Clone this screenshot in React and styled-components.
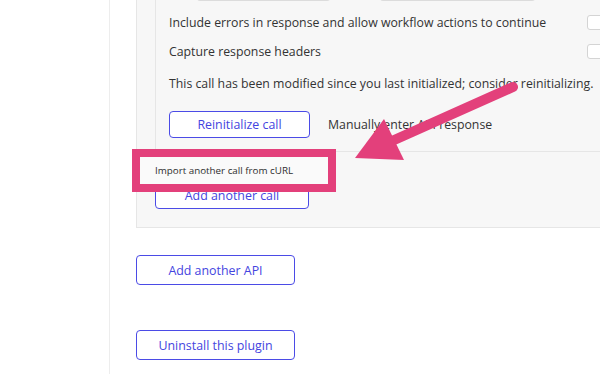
import React from 'react';
import styled, { createGlobalStyle } from 'styled-components';

const GlobalStyle = createGlobalStyle`
  html, body {
    margin: 0;
    padding: 0;
    background: #ffffff;
  }
  body {
    font-family: 'Open Sans', 'Liberation Sans', sans-serif;
    color: #333333;
  }
`;

const Page = styled.div`
  position: relative;
  width: 600px;
  height: 374px;
  overflow: hidden;
  display: flex;
  background: #ffffff;
`;

const Sidebar = styled.div`
  flex: 0 0 109px;
  border-right: 1px solid #ededed;
`;

const Main = styled.div`
  flex: 0 0 auto;
  width: 520px;
  padding-left: 26px;
  margin-top: -40px;
  display: flex;
  flex-direction: column;
  align-items: flex-start;
`;

const OuterCard = styled.div`
  width: 501px;
  box-sizing: border-box;
  background: #f7f7f7;
  border: 1px solid #e6e6e6;
  padding: 19px 18px 18px;
`;

const InnerCard = styled.div`
  background: #f7f7f7;
  border: 1px solid #e6e6e6;
  padding: 0 13px 13px;
`;

const InputRow = styled.div`
  display: flex;
  height: 20px;
  padding-left: 28px;
`;

const FakeInput = styled.div`
  width: ${p => p.$w}px;
  margin-right: ${p => p.$gap || 0}px;
  background: #ffffff;
  border: 1px solid #dcdcdc;
  border-top: none;
  border-radius: 0 0 3px 3px;
`;

const OptionRow = styled.div`
  display: flex;
  align-items: center;
  justify-content: space-between;
  height: 29px;
  margin-top: ${p => p.$top || 0}px;
  font-size: 12.3px;
  white-space: nowrap;
`;

const Checkbox = styled.div`
  width: 15px;
  height: 13px;
  background: #ffffff;
  border: 1px solid #d4d4d4;
  border-radius: 3px;
`;

const Notice = styled.p`
  margin: 9px 0 0;
  font-size: 12.3px;
  line-height: 18px;
  white-space: nowrap;
`;

const ActionRow = styled.div`
  display: flex;
  align-items: center;
  gap: 18px;
  margin-top: 18px;
  font-size: 12.3px;
`;

const Button = styled.button`
  width: ${p => p.$w}px;
  height: ${p => p.$h || 30}px;
  margin-top: ${p => p.$top || 0}px;
  padding: 0;
  background: #ffffff;
  border: 1px solid #4b4be6;
  border-radius: 4px;
  color: #4444e0;
  font-family: 'Open Sans', 'Liberation Sans', sans-serif;
  font-size: 12.4px;
  cursor: pointer;
`;

const Highlight = styled.div`
  position: absolute;
  left: 132px;
  top: 149px;
  width: 204px;
  height: 43px;
  box-sizing: border-box;
  border: 8px solid #e3407b;
  background: #fafafa;
  display: flex;
  align-items: center;
  padding-left: 15px;
  font-size: 9.8px;
  color: #2e2e2e;
`;

const ArrowLayer = styled.svg`
  position: absolute;
  left: 0;
  top: 0;
  pointer-events: none;
`;

const Arrow = () => (
  <ArrowLayer width="600" height="374" viewBox="0 0 600 374">
    <line x1="513" y1="87" x2="392" y2="141" stroke="#e3407b" strokeWidth="10" strokeLinecap="round" />
    <polygon points="355,158 404,160 384,119" fill="#e3407b" />
  </ArrowLayer>
);

const App = () => {
  return (
    <>
      <GlobalStyle />
      <Page>
        <Sidebar />
        <Main>
          <OuterCard>
            <InnerCard>
              <InputRow>
                <FakeInput $w={131} $gap={50} />
                <FakeInput $w={153} />
              </InputRow>
              <OptionRow $top={7}>
                <span>Include errors in response and allow workflow actions to continue</span>
                <Checkbox />
              </OptionRow>
              <OptionRow>
                <span>Capture response headers</span>
                <Checkbox />
              </OptionRow>
              <Notice>
                This call has been modified since you last initialized; consider reinitializing.
              </Notice>
              <ActionRow>
                <Button type="button" $w={141} $h={27}>
                  Reinitialize call
                </Button>
                <span>Manually enter API response</span>
              </ActionRow>
            </InnerCard>
            <Button type="button" $w={154} $h={28} $top={29}>
              Add another call
            </Button>
          </OuterCard>
          <Button type="button" $w={159} $top={27}>
            Add another API
          </Button>
          <Button type="button" $w={159} $top={45}>
            Uninstall this plugin
          </Button>
        </Main>
        <Highlight>Import another call from cURL</Highlight>
        <Arrow />
      </Page>
    </>
  );
};

export default App;
